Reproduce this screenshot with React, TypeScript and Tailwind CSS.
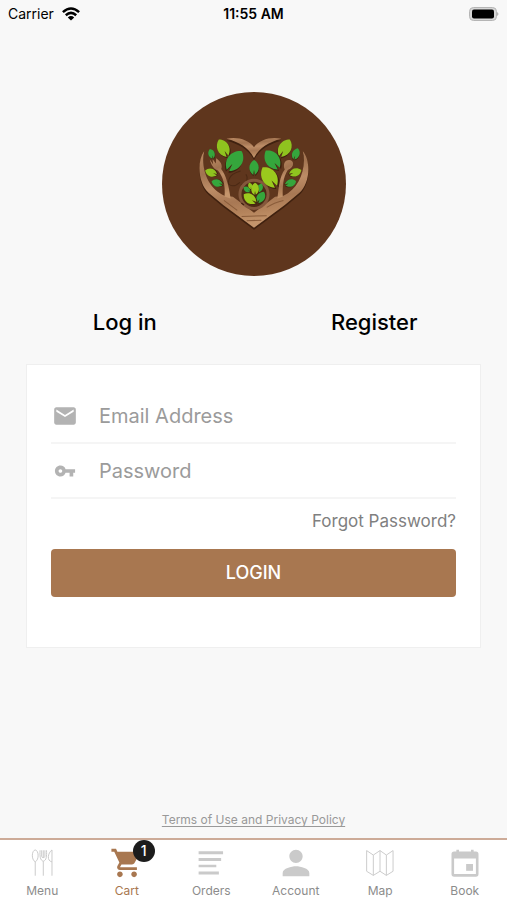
import { MdEmail, MdPerson, MdShoppingCart, MdVpnKey } from "react-icons/md";

interface LeafProps {
  x: number;
  y: number;
  length: number;
  angle: number;
  color: string;
}

const LEAF_PATH = "M0 -31C22 -20 28 10 4 29L0 10L-3 30C-27 12 -22 -18 0 -31Z";

function Leaf({ x, y, length, angle, color }: LeafProps) {
  return (
    <g transform={`translate(${x} ${y}) rotate(${angle}) scale(${length / 60})`}>
      <path d={LEAF_PATH} fill="#3f210f" transform="translate(1 5)" />
      <path d={LEAF_PATH} fill={color} />
    </g>
  );
}

const LEAVES: LeafProps[] = [
  { x: 220, y: 190, length: 56, angle: -27, color: "#8fc31f" },
  { x: 254, y: 228, length: 70, angle: 36, color: "#35a63c" },
  { x: 185, y: 207, length: 30, angle: -18, color: "#35a63c" },
  { x: 184, y: 263, length: 37, angle: -70, color: "#8fc31f" },
  { x: 202, y: 294, length: 34, angle: -72, color: "#35a63c" },
  { x: 312, y: 248, length: 44, angle: 0, color: "#35a63c" },
  { x: 404, y: 190, length: 58, angle: 30, color: "#8fc31f" },
  { x: 367, y: 225, length: 66, angle: -35, color: "#35a63c" },
  { x: 437, y: 207, length: 35, angle: 20, color: "#35a63c" },
  { x: 435, y: 262, length: 38, angle: 70, color: "#8fc31f" },
  { x: 421, y: 294, length: 34, angle: 72, color: "#35a63c" },
  { x: 358, y: 277, length: 70, angle: -34, color: "#9bc91d" },
];

const HEART_TOP =
  "M230 162C262 155 296 165 312 187C328 165 362 155 394 162C356 172 330 187 312 219C294 187 268 172 230 162Z";
const HEART_BOTTOM =
  "M163 199C140 230 146 297 176 323L220 360L312 428L404 360L448 323C478 297 484 230 458 199C470 250 447 311 400 332L375 335L312 383L249 335L224 332C174 311 152 250 163 199Z";

function Logo() {
  return (
    <svg viewBox="37 22 550 550" className="size-46" role="img" aria-label="Heart tree logo">
      <defs>
        <linearGradient id="wood" x1="0" y1="0" x2="0.2" y2="1">
          <stop offset="0" stopColor="#b98862" />
          <stop offset="0.3" stopColor="#a17350" />
          <stop offset="0.5" stopColor="#bd8d67" />
          <stop offset="0.7" stopColor="#a87854" />
          <stop offset="0.85" stopColor="#b5845c" />
          <stop offset="1" stopColor="#c4956c" />
        </linearGradient>
      </defs>
      <circle cx="312" cy="297" r="275" fill="#5f361d" />

      <g fill="#3f210f" transform="translate(0 6)">
        <path d={HEART_TOP} />
        <path d={HEART_BOTTOM} />
      </g>
      <path
        d="M272 258Q233 268 236 297Q250 310 270 292M288 268Q300 287 275 300"
        fill="none"
        stroke="#4b2914"
        strokeWidth="3"
      />
      <g fill="url(#wood)">
        <path d={HEART_TOP} />
        <path d={HEART_BOTTOM} />
        <path d="M180 224L190 239L188 222L198 236L199 220C212 229 219 241 214 252C228 270 237 302 242 340L224 334C227 300 219 275 204 257C191 253 183 238 180 224Z" />
        <path d="M417 225C433 225 434 247 413 255C398 278 397 307 398 334L382 340C386 310 388 275 404 254C398 240 403 225 417 225Z" />
      </g>
      <path
        d="M275 394L350 392M290 407L334 405M350 367Q372 352 400 346M222 346L262 376"
        fill="none"
        stroke="#8a5c3a"
        strokeWidth="3"
      />

      <circle cx="312" cy="328" r="42" fill="#4d2a15" stroke="#84583c" strokeWidth="9" />
      <path d="M274 354L282 360" stroke="#3f210f" strokeWidth="4" />
      <Leaf x={291} y={313} length={24} angle={-55} color="#35a63c" />
      <Leaf x={301} y={303} length={20} angle={-20} color="#8fc31f" />
      <Leaf x={329} y={309} length={28} angle={25} color="#35a63c" />
      <Leaf x={315} y={312} length={36} angle={0} color="#9bc91d" />
      <Leaf x={332} y={337} length={38} angle={30} color="#35a63c" />
      <Leaf x={300} y={341} length={44} angle={-55} color="#9bc91d" />
      {LEAVES.map((leaf) => (
        <Leaf key={`${leaf.x}-${leaf.y}`} {...leaf} />
      ))}
    </svg>
  );
}

function WifiIcon() {
  return (
    <svg viewBox="0 0 18 14" className="h-3.5 w-4.5" fill="none" stroke="#000" strokeWidth="2.5">
      <path d="M0.9 5.2Q9 -2.2 17.1 5.2" />
      <path d="M3.8 8.2Q9 3.5 14.2 8.2" />
      <path d="M9 13.6L5.8 10.4Q9 7.8 12.2 10.4Z" fill="#000" stroke="none" />
    </svg>
  );
}

function BatteryIcon() {
  return (
    <svg viewBox="0 0 30 14" className="h-3.5 w-7.5">
      <rect x="0.5" y="0.5" width="27" height="13" rx="4" fill="#d6d6d6" stroke="#b5b5b5" />
      <rect x="3" y="2.5" width="22" height="9" rx="2" fill="#000" />
      <path d="M28 5Q31 7 28 9Z" fill="#b5b5b5" />
    </svg>
  );
}

function CutleryIcon() {
  return (
    <svg viewBox="87 130 84 87" className="h-7 w-7" fill="none" stroke="#c9c9c9" strokeWidth="3">
      <path d="M108 213V170C95 163 97 134 108 133C119 134 121 163 108 170" />
      <path d="M133 213V168C123 165 122 153 123 134M133 134V157M143 134C144 153 143 165 133 168M128 134V153C128 158 138 158 138 153V134" />
      <path d="M160 213V133C147 142 143 167 160 170" />
    </svg>
  );
}

function OrdersIcon() {
  return (
    <svg viewBox="592 131 87 87" className="h-7 w-7" fill="#cacaca">
      <path d="M597 138H673V147H597ZM597 159H667V168H597ZM597 180H652V188H597ZM597 201H660V210H597Z" />
    </svg>
  );
}

function MapIcon() {
  return (
    <svg viewBox="347 131 88 86" className="h-7 w-7" fill="none" stroke="#cacaca" strokeWidth="3">
      <path d="M349 135L370 149L391 135L411 149L432 135V200L411 213L391 200L370 213L349 200ZM370 149V213M391 135V200M411 149V213" />
    </svg>
  );
}

function CalendarIcon() {
  return (
    <svg viewBox="601 131 85 86" className="h-7 w-7" fill="#cacaca">
      <path
        fillRule="evenodd"
        d="M617 133H625V139H662V133H670V139H677Q685 139 685 147V208Q685 216 677 216H610Q602 216 602 208V147Q602 139 610 139H617ZM610 160V208H677V160Z"
      />
      <path d="M647 177H668V198H647Z" />
    </svg>
  );
}

const TABS = [
  { label: "Menu", icon: <CutleryIcon /> },
  { label: "Cart", icon: <MdShoppingCart size={34} />, badge: 1 },
  { label: "Orders", icon: <OrdersIcon /> },
  { label: "Account", icon: <MdPerson size={42} className="text-[#cacaca]" /> },
  { label: "Map", icon: <MapIcon /> },
  { label: "Book", icon: <CalendarIcon /> },
];

export default function App() {
  return (
    <div className="flex min-h-screen flex-col bg-[#f8f8f8] font-['Inter',sans-serif] text-black">
      <header className="grid h-7 grid-cols-3 items-center px-2 text-sm">
        <div className="flex items-center gap-2">
          <span>Carrier</span>
          <WifiIcon />
        </div>
        <span className="text-center font-semibold">11:55 AM</span>
        <div className="flex justify-end">
          <BatteryIcon />
        </div>
      </header>

      <main className="flex flex-1 flex-col px-[26px]">
        <div className="flex justify-center pt-16">
          <Logo />
        </div>

        <div className="-mx-[26px] grid grid-cols-2 pt-[30px] pr-2 text-center text-[22px] leading-8 font-medium">
          <button type="button">Log in</button>
          <button type="button">Register</button>
        </div>

        <form
          className="mt-[26px] border border-[#efefef] bg-white px-6 pt-6 pb-[50px]"
          onSubmit={(event) => event.preventDefault()}
        >
          <div className="flex h-[55px] items-center gap-5 border-b-2 border-[#f5f5f5]">
            <label htmlFor="email" aria-label="Email Address" className="flex w-7 justify-center text-[#b3b3b3]">
              <MdEmail size={26} />
            </label>
            <input
              id="email"
              type="email"
              placeholder="Email Address"
              className="min-w-0 flex-1 text-xl outline-none placeholder:text-[#9b9b9b]"
            />
          </div>
          <div className="flex h-[55px] items-center gap-5 border-b-2 border-[#f5f5f5]">
            <label htmlFor="password" aria-label="Password" className="flex w-7 justify-center text-[#b3b3b3]">
              <MdVpnKey size={22} />
            </label>
            <input
              id="password"
              type="password"
              placeholder="Password"
              className="min-w-0 flex-1 text-xl outline-none placeholder:text-[#9b9b9b]"
            />
          </div>
          <div className="flex h-[50px] justify-end pt-2.5">
            <a href="#forgot" className="text-[17px] leading-6 text-[#808080]">
              Forgot Password?
            </a>
          </div>
          <button type="submit" className="h-12 w-full rounded bg-[#a87750] text-lg font-medium text-white">
            LOGIN
          </button>
        </form>

        <div className="mt-auto flex justify-center pt-8 pb-2.5">
          <a href="#terms" className="text-xs text-[#999999] underline underline-offset-2">
            Terms of Use and Privacy Policy
          </a>
        </div>
      </main>

      <nav className="grid grid-cols-6 border-t-2 border-[#cdab98] bg-white">
        {TABS.map((tab) => (
          <a
            key={tab.label}
            href={`#${tab.label.toLowerCase()}`}
            className={`flex h-15 flex-col items-center text-xs ${tab.badge ? "text-[#a87750]" : "text-[#8c8c8c]"}`}
          >
            <span className="relative flex h-[46px] w-10 items-center justify-center">
              {tab.icon}
              {tab.badge && (
                <span className="absolute top-0 -right-2 flex size-[22px] items-center justify-center rounded-full bg-[#1c1c1c] text-sm font-medium text-white">
                  {tab.badge}
                </span>
              )}
            </span>
            <span className="-mt-1 leading-[18px]">{tab.label}</span>
          </a>
        ))}
      </nav>
    </div>
  );
}
